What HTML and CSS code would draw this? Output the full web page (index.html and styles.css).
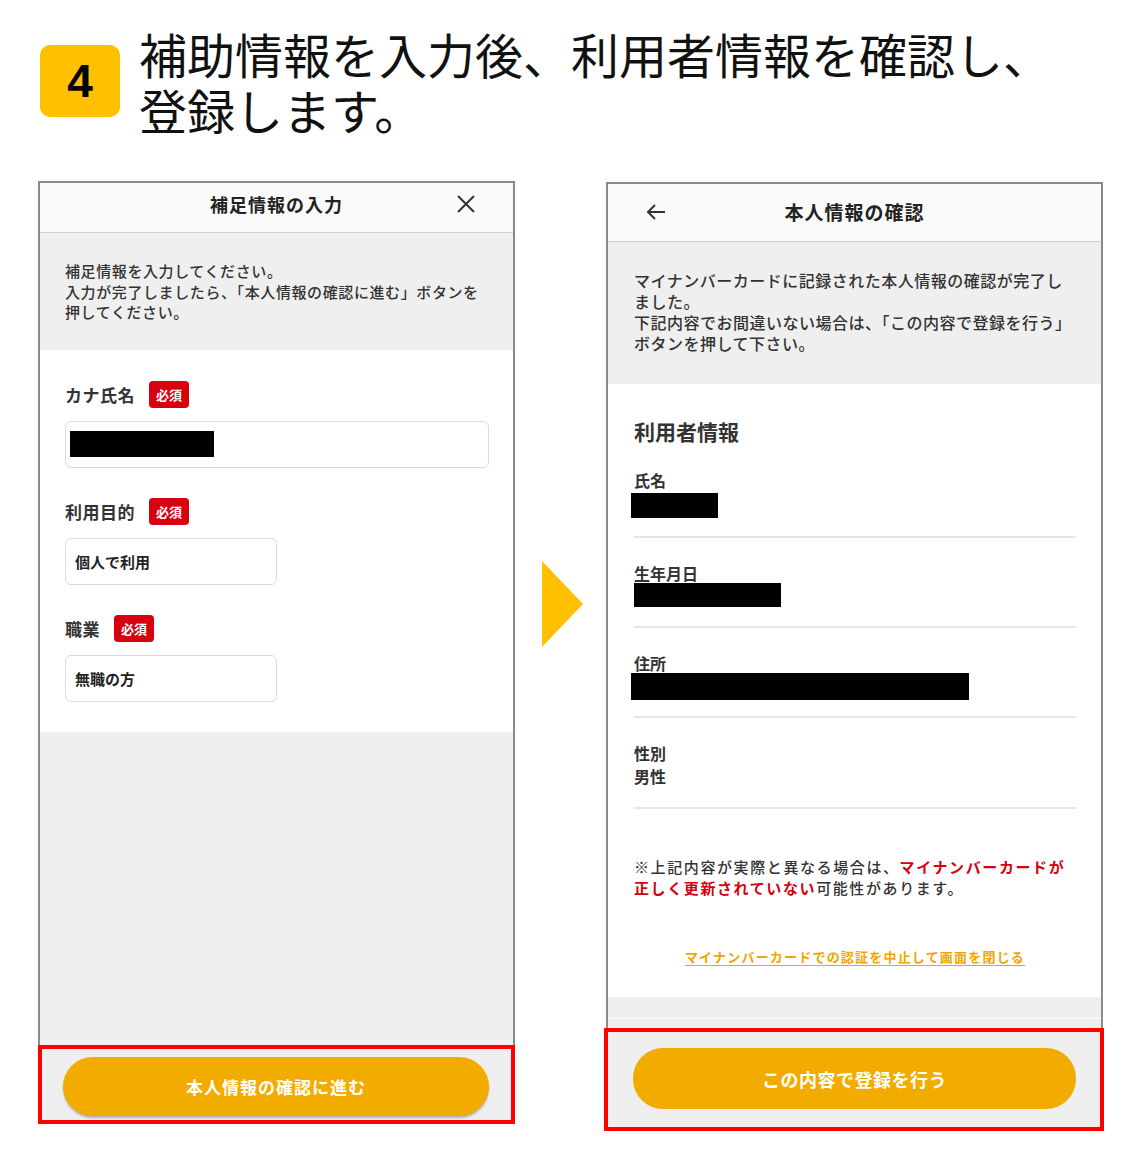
FILE: index.html
```
<!DOCTYPE html>
<html lang="ja">
<head>
<meta charset="utf-8">
<title>ステップ4</title>
<link rel="stylesheet" href="styles.css">
</head>
<body>
<header class="step">
  <div class="step-num">4</div>
  <h1 class="step-title">補助情報を入力後、利用者情報を確認し、<br>登録します。</h1>
</header>

<main class="flow">
  <section class="col col-left">
    <div class="screen screen-left">
      <div class="bar bar-left">
        <span></span>
        <h2 class="bar-title">補足情報の入力</h2>
        <svg class="close" width="18" height="18" viewBox="0 0 18 18"><path d="M1 1L17 17M17 1L1 17" stroke="#333" stroke-width="2" fill="none"/></svg>
      </div>
      <div class="info info-left">補足情報を入力してください。<br>入力が完了しましたら、「本人情報の確認に進む」ボタンを<br>押してください。</div>
      <div class="form">
        <div class="field">
          <div class="field-head"><span class="field-label">カナ氏名</span><span class="req">必須</span></div>
          <div class="input input-wide"><span class="redact redact-kana"></span></div>
        </div>
        <div class="field">
          <div class="field-head"><span class="field-label">利用目的</span><span class="req">必須</span></div>
          <div class="input input-narrow">個人で利用</div>
        </div>
        <div class="field">
          <div class="field-head"><span class="field-label">職業</span><span class="req">必須</span></div>
          <div class="input input-narrow">無職の方</div>
        </div>
      </div>
      <div class="filler"></div>
    </div>
    <div class="action action-left">
      <div class="btn btn-left">本人情報の確認に進む</div>
    </div>
  </section>

  <div class="arrow-col">
    <svg width="41" height="86" viewBox="0 0 41 86"><polygon points="0,0 41,43 0,86" fill="#ffc000"/></svg>
  </div>

  <section class="col col-right">
    <div class="screen screen-right">
      <div class="bar bar-right">
        <svg class="back" width="20" height="16" viewBox="0 0 20 16"><path d="M19 8H2M9 1L2 8L9 15" stroke="#333" stroke-width="2" fill="none"/></svg>
        <h2 class="bar-title bar-title-right">本人情報の確認</h2>
        <span></span>
      </div>
      <div class="info info-right">マイナンバーカードに記録された本人情報の確認が完了し<br>ました。<br>下記内容でお間違いない場合は、「この内容で登録を行う」<br>ボタンを押して下さい。</div>
      <div class="confirm">
        <h3 class="sec-title">利用者情報</h3>
        <div class="item">
          <div class="item-label">氏名</div>
          <div class="item-value"><span class="redact redact-name"></span></div>
        </div>
        <div class="item">
          <div class="item-label">生年月日</div>
          <div class="item-value"><span class="redact redact-birth"></span></div>
        </div>
        <div class="item">
          <div class="item-label">住所</div>
          <div class="item-value"><span class="redact redact-addr"></span></div>
        </div>
        <div class="item">
          <div class="item-label">性別</div>
          <div class="item-value">男性</div>
        </div>
        <p class="caution">※上記内容が実際と異なる場合は、<strong class="warn">マイナンバーカードが</strong><br><strong class="warn">正しく更新されていない</strong>可能性があります。</p>
        <p class="link-row"><a class="cancel-link">マイナンバーカードでの認証を中止して画面を閉じる</a></p>
      </div>
      <div class="gap"></div>
      <div class="filler"></div>
    </div>
    <div class="action action-right">
      <div class="btn btn-right">この内容で登録を行う</div>
    </div>
  </section>
</main>
</body>
</html>
```
FILE: styles.css
```
* { box-sizing: border-box; }
html, body { margin: 0; padding: 0; background: #fff; }
body {
  font-family: "Noto Sans CJK JP", "Noto Sans", sans-serif;
  color: #333;
  width: 1138px;
  height: 1171px;
  overflow: hidden;
}

/* Step header */
.step {
  display: flex;
  align-items: center;
  gap: 19px;
  padding: 25px 0 0 40px;
}
.step-num {
  width: 80px;
  height: 72px;
  background: #ffc000;
  border-radius: 10px;
  display: flex;
  align-items: center;
  justify-content: center;
  font-family: "Liberation Sans", Arial, sans-serif;
  font-weight: 700;
  font-size: 46px;
  color: #000;
}
.step-title {
  margin: 0;
  font-size: 48px;
  font-weight: 400;
  line-height: 56px;
  color: #111;
  white-space: nowrap;
}

/* Flow */
.flow {
  display: flex;
  align-items: flex-start;
  padding-left: 38px;
  margin-top: 44px;
}
.col { display: flex; flex-direction: column; }
.col-left { width: 477px; }
.col-right { width: 500px; margin-top: 1px; }
.arrow-col {
  width: 89px;
  padding: 380px 0 0 27px;
}
.arrow-col svg { display: block; }

/* Phone screen */
.screen {
  display: flex;
  flex-direction: column;
  border: 2px solid #8a8a8a;
  border-bottom: none;
  background: #efefef;
}
.screen-left { height: 864px; }
.screen-right { height: 846px; margin: 0 1px 0 2px; }

.bar {
  display: grid;
  grid-template-columns: 1fr auto 1fr;
  align-items: center;
  background: #fafafa;
  border-bottom: 1px solid #cfcfcf;
}
.bar-left { height: 50px; padding-bottom: 8px; }
.bar-right { height: 58px; padding-bottom: 2px; }
.bar-title {
  margin: 0;
  font-size: 18px;
  font-weight: 700;
  letter-spacing: 1px;
  color: #222;
}
.bar-title-right { font-size: 19px; }
.close { justify-self: end; margin-right: 38px; }
.back { justify-self: start; margin-left: 38px; }

.info {
  background: #efefef;
  white-space: nowrap;
  font-weight: 500;
  color: #333;
}
.info-left {
  padding: 28px 25px 27px;
  font-size: 15px;
  line-height: 20.5px;
  letter-spacing: 0.6px;
}
.info-right {
  padding: 28px 26px 30px;
  font-size: 16px;
  line-height: 21px;
  letter-spacing: 0.5px;
}

/* Left form */
.form {
  background: #fff;
  padding: 31px 25px 30px;
}
.field + .field { margin-top: 30px; }
.field-head {
  display: flex;
  align-items: center;
  gap: 14px;
  height: 27px;
}
.field-label {
  font-size: 17px;
  font-weight: 700;
  color: #333;
  letter-spacing: 0.5px;
}
.req {
  width: 40px;
  height: 27px;
  border-radius: 4px;
  background: #d7000f;
  color: #fff;
  font-size: 13px;
  font-weight: 700;
  display: flex;
  align-items: center;
  justify-content: center;
}
.input {
  margin-top: 13px;
  height: 47px;
  border: 1px solid #dcdcdc;
  border-radius: 6px;
  background: #fff;
  display: flex;
  align-items: center;
  font-size: 15px;
  font-weight: 700;
  color: #222;
}
.input-wide { width: 424px; padding-left: 4px; }
.input-narrow { width: 212px; padding-left: 9px; }

.redact { display: block; background: #000; }
.redact-kana { width: 144px; height: 26px; }
.redact-name { width: 87px; height: 25px; margin: 2px 0 0 -3px; }
.redact-birth { width: 147px; height: 24px; margin-top: -1px; }
.redact-addr { width: 338px; height: 27px; margin: -1px 0 0 -3px; }

.filler { flex: 1; background: #efefef; }

/* Right confirm */
.confirm {
  background: #fff;
  padding: 33px 25px 30px 26px;
}
.sec-title {
  margin: 0;
  font-size: 21px;
  line-height: 28px;
  font-weight: 700;
  color: #333;
}
.item {
  padding: 24px 0 19px;
  border-bottom: 2px solid #e6e6e6;
}
.item-label {
  font-size: 16px;
  line-height: 22px;
  font-weight: 700;
  color: #333;
}
.item-value {
  height: 24px;
  font-size: 16px;
  line-height: 24px;
  font-weight: 700;
  color: #333;
}
.caution {
  margin: 47px 0 0;
  font-size: 15px;
  line-height: 21px;
  letter-spacing: 1.6px;
  font-weight: 500;
  white-space: nowrap;
  color: #333;
}
.warn { color: #d7000f; font-weight: 700; }
.link-row {
  margin: 47px 0 0;
  text-align: center;
  line-height: 20px;
}
.cancel-link {
  font-size: 13px;
  font-weight: 700;
  letter-spacing: 1.2px;
  color: #f0a500;
  text-decoration: underline;
  text-underline-offset: 3px;
}
.gap {
  height: 22px;
  background: #efefef;
  border-bottom: 2px solid #f8f8f8;
}

/* Bottom action (highlighted) */
.action {
  border: 4px solid #ff0000;
  background: #efefef;
}
.action-left {
  padding: 8px 22px 4px 21px;
}
.action-right {
  padding: 16px 24px 18px 25px;
}
.btn {
  background: #f2ac00;
  color: #fff;
  font-weight: 700;
  display: flex;
  align-items: center;
  justify-content: center;
  border-radius: 30px;
}
.btn-left {
  height: 59px;
  font-size: 17px;
  letter-spacing: 1px;
  box-shadow: 0 2px 2px rgba(0,0,0,0.25);
}
.btn-right {
  height: 61px;
  font-size: 18px;
  letter-spacing: 0.5px;
}
```
